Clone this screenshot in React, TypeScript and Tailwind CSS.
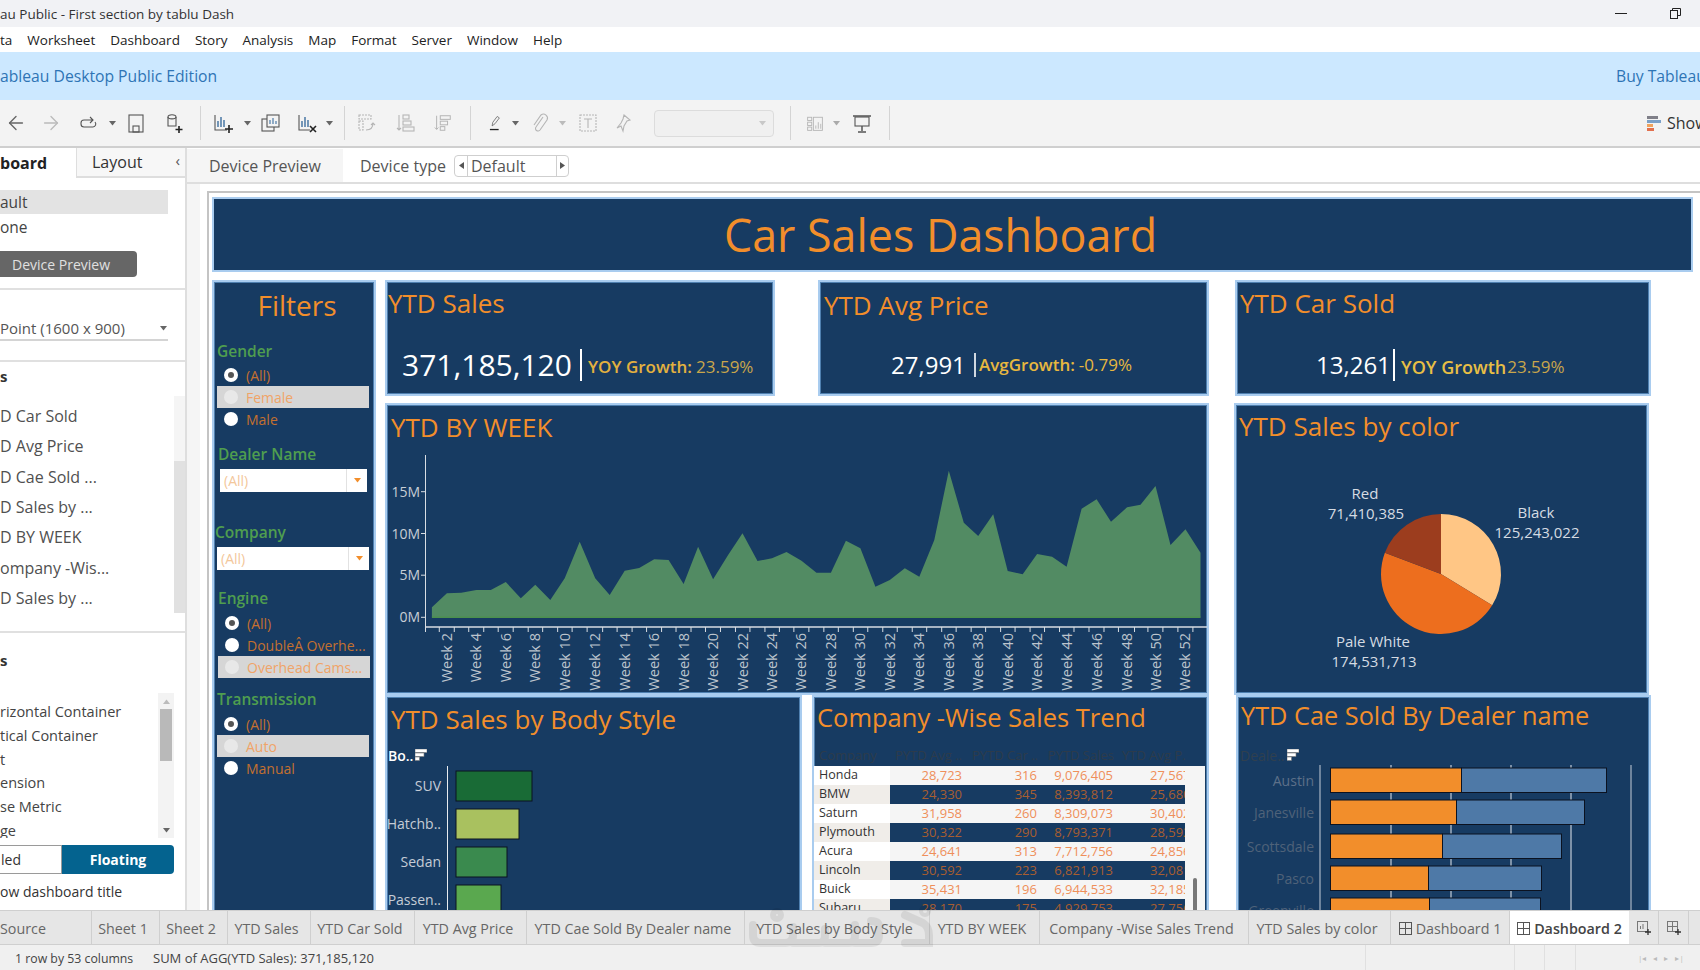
import React from "react";
import { ArrowLeft, ArrowRight } from "lucide-react";

const Caret = ({ c = "#666" }: { c?: string }) => (
  <svg width="7" height="5" viewBox="0 0 7 5"><path d="M0 0h7L3.5 4.5z" fill={c} /></svg>
);

const Cell = ({ w, children }: { w: string; children?: React.ReactNode }) => (
  <div className={`${w} h-full flex items-center justify-center shrink-0`}>{children}</div>
);

const Sep = () => <div className="w-px h-[34px] bg-[#d4d4d4]" />;

const S = ({ children, w = 22, h = 22 }: { children: React.ReactNode; w?: number; h?: number }) => (
  <svg width={w} height={h} viewBox="0 0 22 22" fill="none" stroke="#555" strokeWidth="1.1">{children}</svg>
);

function Toolbar() {
  const off = "#b5b5b5";
  return (
    <div className="h-[48px] bg-[#f3f3f3] border-b-2 border-[#cfcfcf] flex items-center shrink-0">
      <Cell w="w-[31px]"><ArrowLeft size={22} color="#666" strokeWidth={1.5} /></Cell>
      <Cell w="w-[40px]"><ArrowRight size={22} color="#bbb" strokeWidth={1.5} /></Cell>
      <Cell w="w-[34px]"><S><path d="M4 11a3 3 0 0 1 3-3h9M13 5l3 3-3 3" /><path d="M4 11v1a3 3 0 0 0 3 3h9a3 3 0 0 0 2-5" /></S></Cell>
      <Cell w="w-[14px]"><Caret /></Cell>
      <Cell w="w-[34px]"><S><rect x="4" y="3" width="14" height="17" /><rect x="8" y="14" width="6" height="6" /></S></Cell>
      <Cell w="w-[40px]"><S><path d="M6 5c0-3 8-3 8 0v9H6z" /><path d="M6 5c0 2.500 8 2.500 8 0" /><path d="M17 14v7M13.500 17.500h7" stroke="#222" strokeWidth="1.6" /></S></Cell>
      <Cell w="w-[14px]"><Sep /></Cell>
      <Cell w="w-[32px]"><S><path d="M3 3v15h12" /><path d="M6 15V9M9 15V5M12 15V8" stroke="#3c6e9e" strokeWidth="1.4" /><path d="M17 13v8M13 17h8" stroke="#222" strokeWidth="1.6" /></S></Cell>
      <Cell w="w-[16px]"><Caret /></Cell>
      <Cell w="w-[30px]"><S><rect x="3" y="7" width="12" height="12" /><rect x="8" y="3" width="12" height="12" fill="#f3f3f3" /><path d="M11 12V8M14 12V6M17 12V9" stroke="#3c6e9e" /></S></Cell>
      <div className="w-[4px]" />
      <Cell w="w-[36px]"><S><path d="M3 3v15h11" /><path d="M6 15V9M9 15V5M12 15V8" stroke="#3c6e9e" strokeWidth="1.4" /><path d="M14 14l6 6M20 14l-6 6" stroke="#222" strokeWidth="1.6" /></S></Cell>
      <Cell w="w-[8px]"><Caret /></Cell>
      <Cell w="w-[22px]"><Sep /></Cell>
      <Cell w="w-[24px]"><S><g stroke={off} strokeDasharray="2 1"><rect x="3" y="3" width="12" height="4" /><rect x="3" y="9" width="4" height="9" /></g><path d="M10 18c4 0 7-2 7-7M15 13l2-2 2 2" stroke={off} /></S></Cell>
      <Cell w="w-[54px]"><S><g stroke={off}><path d="M4 3v15M2 16l2 2 2-2" /><rect x="8" y="3" width="6" height="4" /><rect x="8" y="9" width="8" height="4" /><rect x="8" y="15" width="11" height="4" /></g></S></Cell>
      <Cell w="w-[20px]"><S><g stroke={off}><path d="M4 3v15M2 16l2 2 2-2" /><rect x="8" y="3" width="11" height="4" /><rect x="8" y="9" width="8" height="4" /><rect x="8" y="15" width="5" height="4" /></g></S></Cell>
      <Cell w="w-[34px]"><Sep /></Cell>
      <Cell w="w-[16px]"><S><path d="M7 15l1-5 6-8 3 2-6 8z" stroke="#666" /><path d="M4 20h12" stroke="#222" strokeWidth="1.8" /></S></Cell>
      <Cell w="w-[24px]"><Caret /></Cell>
      <Cell w="w-[24px]"><S><path d="M15 5l-7 10a2.500 2.500 0 0 0 4 3l7-10a4 4 0 0 0-6-5L6 13" stroke={off} /></S></Cell>
      <Cell w="w-[22px]"><Caret c="#bbb" /></Cell>
      <Cell w="w-[30px]"><S><rect x="3" y="3" width="16" height="16" stroke={off} strokeDasharray="2 1" /><path d="M7 7h8M11 7v9" stroke={off} /></S></Cell>
      <Cell w="w-[40px]"><S><path d="M12 3l6 5-3 1-3 5-1 5-2-5-4 2 4-5 2-4z" stroke={off} /></S></Cell>
      <div className="w-[11px]" />
      <div className="w-[120px] h-[27px] bg-[#f0f0f0] border border-[#dcdcdc] rounded-sm flex items-center justify-end pr-[7px] shrink-0"><Caret c="#c8c8c8" /></div>
      <Cell w="w-[32px]"><Sep /></Cell>
      <Cell w="w-[18px]"><S><g stroke={off}><rect x="2" y="4" width="5" height="4" /><rect x="2" y="10" width="5" height="4" /><rect x="2" y="16" width="5" height="4" /><rect x="9" y="4" width="11" height="16" /><path d="M12 18v-4M15 18v-8M18 18v-6" /></g></S></Cell>
      <Cell w="w-[24px]"><Caret c="#aaa" /></Cell>
      <Cell w="w-[28px]"><S><rect x="4" y="5" width="14" height="9" /><path d="M2 4h18M11 14v5M7 20h8" strokeWidth="1.5" /></S></Cell>
      <Cell w="w-[26px]"><Sep /></Cell>
      <div className="ml-auto flex items-center gap-[6px] w-[53px] overflow-hidden shrink-0">
        <svg width="14" height="15" viewBox="0 0 14 15" className="shrink-0">
          <rect x="0" y="0" width="11" height="3" fill="#7f7f88" />
          <rect x="0" y="4" width="14" height="3" fill="#7ba0c8" />
          <rect x="0" y="8" width="6" height="3" fill="#f0a35e" />
          <rect x="0" y="12" width="7" height="3" fill="#e2704e" />
        </svg>
        <span className="text-[16px] text-[#333] whitespace-nowrap">Show</span>
      </div>
    </div>
  );
}

function Sidebar() {
  return (
    <div className="w-[187px] shrink-0 border-r-2 border-[#dedede] bg-white flex flex-col text-[#444] overflow-hidden">
      <div className="h-[30px] flex shrink-0">
        <div className="w-[76px] font-bold text-[16px] text-[#222] flex items-center">board</div>
        <div className="w-[109px] bg-[#f7f7f7] border-l border-b-2 border-[#dedede] flex items-center justify-between pl-[15px] pr-[5px]">
          <span className="text-[16px] text-[#333]">Layout</span>
          <span className="text-[15px] text-[#555] leading-none -mt-[4px]">‹</span>
        </div>
      </div>
      <div className="mt-[12px] h-[24px] w-[168px] bg-[#e3e3e3] flex items-center text-[15.500px] pt-[1px]">ault</div>
      <div className="h-[28px] flex items-center text-[15.500px]">one</div>
      <div className="mt-[9px] h-[26px] w-[137px] bg-[#666] rounded-r-sm flex items-center pl-[12px] text-[14px] text-[#e0e0e0]">Device Preview</div>
      <div className="mt-[11px] h-[2px] bg-[#e0e0e0]" />
      <div className="mt-[28px] h-[23px] w-[168px] border-b-2 border-[#d4d4d4] flex items-center justify-between pr-[1px] text-[15px] text-[#555]">
        <span>Point (1600 x 900)</span>
        <Caret />
      </div>
      <div className="mt-[19px] h-[2px] bg-[#e0e0e0]" />
      <div className="h-[28px] flex items-center font-bold text-[15px] text-[#333]">s</div>
      <div className="mt-[6px] h-[217px] flex shrink-0">
        <div className="w-[174px] pt-[5px] text-[16px] text-[#505050]">
          {["D Car Sold", "D Avg Price", "D Cae Sold ...", "D Sales by ...", "D BY WEEK", "ompany -Wis...", "D Sales by ..."].map((t, i) => (
            <div key={i} className="h-[30.300px] flex items-center whitespace-nowrap">{t}</div>
          ))}
        </div>
        <div className="w-[11px] bg-[#f5f5f5] flex flex-col">
          <div className="h-[65px]" />
          <div className="flex-1 bg-[#e1e1e1]" />
        </div>
      </div>
      <div className="mt-[18px] h-[2px] bg-[#e0e0e0]" />
      <div className="mt-[17px] h-[20px] flex items-center font-bold text-[15px] text-[#333]">s</div>
      <div className="mt-[23px] h-[145px] w-[174px] flex shrink-0">
        <div className="flex-1 pt-[7px] text-[14.500px] text-[#444] overflow-hidden">
          {["rizontal Container", "tical Container", "t", "ension", "se Metric", "ge"].map((t) => (
            <div key={t} className="h-[23.800px] flex items-center whitespace-nowrap">{t}</div>
          ))}
        </div>
        <div className="w-[16px] bg-[#f3f3f3] flex flex-col items-center">
          <div className="h-[16px] flex items-center"><svg width="7" height="5" viewBox="0 0 7 5"><path d="M0 5h7L3.500 .5z" fill="#bbb" /></svg></div>
          <div className="w-[12px] h-[52px] bg-[#b9b9b9]" />
          <div className="mt-auto h-[16px] flex items-center"><Caret /></div>
        </div>
      </div>
      <div className="mt-[7px] h-[29px] w-[174px] flex shrink-0 text-[14px]">
        <div className="w-[62px] border border-l-0 border-[#9a9a9a] flex items-center pl-[1px] text-[#333]">led</div>
        <div className="flex-1 bg-[#04638f] rounded-r flex items-center justify-center font-bold text-white">Floating</div>
      </div>
      <div className="mt-[6px] h-[22px] flex items-center text-[14px] text-[#333] whitespace-nowrap">ow dashboard title</div>
    </div>
  );
}

const Panel = ({ w, h, children, cls = "" }: { w: string; h: string; children?: React.ReactNode; cls?: string }) => (
  <div className={`${w} ${h} ${cls} shrink-0 bg-[#173b62] border-2 border-[#a9ccef] shadow-[inset_0_0_0_1px_#4f80b0] overflow-hidden`}>{children}</div>
);

const PTitle = ({ children, h = "h-[42px]", cls = "", size = "text-[26px]" }: { children: React.ReactNode; h?: string; cls?: string; size?: string }) => (
  <div className={`${h} ${cls} ${size} flex items-center text-[#f28e2b] whitespace-nowrap`}>{children}</div>
);

const Radio = ({ label, on, hi, cls = "ml-[3px]" }: { label: string; on?: boolean; hi?: boolean; cls?: string }) => (
  <div className={`w-[152px] h-[22px] flex items-center pl-[7px] gap-[8px] text-[14px] whitespace-nowrap overflow-hidden ${hi ? "bg-[#d6d6d6] text-[#f0a468]" : "text-[#c4702f]"} ${cls}`}>
    <span className={`w-[14px] h-[14px] rounded-full flex items-center justify-center shrink-0 ${hi ? "bg-[#e8e8e8]" : "bg-white"}`}>
      {on && <span className="w-[6px] h-[6px] rounded-full bg-[#555]" />}
    </span>
    <span>{label}</span>
  </div>
);

const FHead = ({ children, cls }: { children: React.ReactNode; cls: string }) => (
  <div className={`h-[20px] flex items-center font-semibold text-[15.500px] text-[#4f9e4f] ${cls}`}>{children}</div>
);

const Sel = ({ cls }: { cls: string }) => (
  <div className={`h-[23px] bg-white flex items-center text-[14px] text-[#f3c79b] ${cls}`}>
    <span className="flex-1 pl-[4px]">(All)</span>
    <span className="w-[21px] h-full border-l border-[#e2e2e2] flex items-center justify-center"><Caret c="#f28e2b" /></span>
  </div>
);

function Filters() {
  return (
    <Panel w="w-[164px]" h="h-[640px]">
      <div className="h-[46px] flex items-center justify-center pl-[6px] text-[28px] text-[#f28e2b]">Filters</div>
      <FHead cls="mt-[14px] ml-[3px]">Gender</FHead>
      <div className="mt-[2px]">
        <Radio label="(All)" on />
        <Radio label="Female" hi />
        <Radio label="Male" />
      </div>
      <FHead cls="mt-[15px] ml-[4px]">Dealer Name</FHead>
      <Sel cls="mt-[4px] ml-[6px] w-[147px]" />
      <FHead cls="mt-[31px] ml-[1px]">Company</FHead>
      <Sel cls="mt-[4px] ml-[3px] w-[152px]" />
      <FHead cls="mt-[19px] ml-[4px]">Engine</FHead>
      <div className="mt-[3px]">
        <Radio label="(All)" on cls="ml-[4px]" />
        <Radio label="DoubleÂ Overhe..." cls="ml-[4px]" />
        <Radio label="Overhead Cams..." hi cls="ml-[4px]" />
      </div>
      <FHead cls="mt-[12px] ml-[3px]">Transmission</FHead>
      <div className="mt-[3px]">
        <Radio label="(All)" on />
        <Radio label="Auto" hi />
        <Radio label="Manual" />
      </div>
    </Panel>
  );
}

function Kpis() {
  return (
    <div className="flex h-[116px] shrink-0">
      <Panel w="w-[390px]" h="h-[116px]">
        <PTitle h="h-[42px]" cls="pl-[1px]">YTD Sales</PTitle>
        <div className="mt-[23px] pl-[15px] h-[36px] flex items-center whitespace-nowrap">
          <span className="text-[30px] text-white leading-none w-[171px]">371,185,120</span>
          <span className="ml-[7px] w-[2px] h-[32px] bg-white" />
          <span className="ml-[6px] pt-[4px] text-[17px] font-semibold text-[#e3b13f]">YOY Growth:</span>
          <span className="ml-[4px] pt-[4px] text-[17px] text-[#c9a64b]">23.59%</span>
        </div>
      </Panel>
      <div className="w-[43px] shrink-0" />
      <Panel w="w-[391px]" h="h-[116px]">
        <PTitle h="h-[46px]" cls="pl-[4px]">YTD Avg Price</PTitle>
        <div className="mt-[22px] pl-[71px] h-[30px] flex items-center whitespace-nowrap">
          <span className="text-[24px] text-white leading-none w-[72px]">27,991</span>
          <span className="ml-[11px] w-[2px] h-[24px] bg-[#d0d8e0]" />
          <span className="ml-[3px] text-[17px] font-semibold text-[#e8b83f]">AvgGrowth:</span>
          <span className="ml-[4px] text-[17px] font-medium text-[#e8b83f]">-0.79%</span>
        </div>
      </Panel>
      <div className="w-[26px] shrink-0" />
      <Panel w="w-[416px]" h="h-[116px]">
        <PTitle h="h-[42px]" cls="pl-[3px]">YTD Car Sold</PTitle>
        <div className="mt-[23px] pl-[79px] h-[36px] flex items-center whitespace-nowrap">
          <span className="text-[24px] text-white leading-none w-[71px]">13,261</span>
          <span className="ml-[6px] w-[2px] h-[32px] bg-white" />
          <span className="ml-[6px] pt-[4px] text-[18px] font-semibold text-[#e8bf45]">YOY Growth</span>
          <span className="ml-[1px] pt-[4px] text-[17px] text-[#c9a64b]">23.59%</span>
        </div>
      </Panel>
    </div>
  );
}

const weekZ: [number, number][] = [
  [95,1012],[123,970],[150,968],[178,960],[205,960],[233,936],[261,985],[288,944],[316,990],[343,925],[371,815],[400,925],[427,975],[455,902],[482,894],[510,868],[537,870],[565,942],[592,830],[620,928],[648,855],[675,790],[703,873],[730,865],[757,846],[785,872],[813,908],[840,908],[868,812],[895,835],[923,950],[950,930],[978,895],[1005,920],[1033,810],[1060,602],[1088,758],[1115,798],[1143,733],[1170,903],[1198,913],[1225,852],[1253,860],[1280,890],[1308,716],[1336,688],[1363,755],[1393,712],[1418,704],[1446,648],[1474,825],[1502,778],[1530,848],
];
const px = (z: number) => 380 + z / 1.867;
const py = (z: number) => 270 + z / 3;

function WeekChart() {
  const pts = weekZ.map(([x, y]) => `${px(x).toFixed(1)},${py(y).toFixed(1)}`).join(" ");
  const base = 617.3;
  const area = `${px(95).toFixed(1)},${base} ${pts} ${px(1530).toFixed(1)},${base}`;
  const axis = "#d8dde3";
  return (
    <svg viewBox="386 447 820 246" className="w-[820px] h-[246px] block">
      <polygon points={area} fill="#528b63" />
      <line x1={px(95)} x2={px(1530)} y1={base} y2={base} stroke="#4c8f4f" strokeWidth="1.5" />
      <line x1="424.500" x2="424.500" y1="455" y2="632" stroke={axis} />
      <line x1="424.500" x2="1207" y1="627" y2="627" stroke={axis} strokeWidth="1.5" />
      {weekZ.map(([x], i) => (
        <line key={i} x1={px(x) + 7.4} x2={px(x) + 7.4} y1="627" y2="632" stroke={axis} />
      ))}
      {[["15M", 491.7], ["10M", 533.5], ["5M", 575.2], ["0M", 617.3]].map(([t, y]) => (
        <g key={t as string}>
          <line x1="420" x2="424.500" y1={y as number} y2={y as number} stroke={axis} />
          <text x="419" y={(y as number) + 5} textAnchor="end" fontSize="14" fill="#c8ced6">{t}</text>
        </g>
      ))}
      {weekZ.map(([x], i) =>
        i % 2 === 1 ? (
          <text key={i} transform={`translate(${px(x) + 5},633) rotate(-90)`} textAnchor="end" fontSize="14.500" fill="#bcc4cd">{`Week ${i + 1}`}</text>
        ) : null
      )}
    </svg>
  );
}

function PieChart() {
  const cx = 1441, cy = 574, r = 60;
  const vals = [125243022, 174531713, 71410385];
  const cols = ["#ffc685", "#ed6e1e", "#9c3d1e"];
  const total = vals.reduce((a, b) => a + b, 0);
  let acc = 0;
  const txt = "#d5dbe3";
  return (
    <svg viewBox="1236 447 411 246" className="w-[411px] h-[246px] block">
      {vals.map((v, i) => {
        const a0 = (acc / total) * 2 * Math.PI;
        acc += v;
        const a1 = (acc / total) * 2 * Math.PI;
        const d = `M${cx} ${cy}L${cx + r * Math.sin(a0)} ${cy - r * Math.cos(a0)}A${r} ${r} 0 ${a1 - a0 > Math.PI ? 1 : 0} 1 ${cx + r * Math.sin(a1)} ${cy - r * Math.cos(a1)}Z`;
        return <path key={i} d={d} fill={cols[i]} />;
      })}
      <g fontSize="15" fill={txt} textAnchor="middle">
        <text x="1365" y="499">Red</text>
        <text x="1366" y="519">71,410,385</text>
        <text x="1536" y="518">Black</text>
        <text x="1537" y="538">125,243,022</text>
        <text x="1373" y="647">Pale White</text>
        <text x="1374" y="667">174,531,713</text>
      </g>
    </svg>
  );
}

const SortIc = () => (
  <svg width="12" height="12" viewBox="0 0 12 12">
    <rect x="0" y="0" width="12" height="3.500" fill="#fff" stroke="#777" strokeWidth=".6" />
    <rect x="0" y="4" width="9" height="3.500" fill="#fff" stroke="#777" strokeWidth=".6" />
    <rect x="0" y="8" width="4.500" height="3.500" fill="#fff" stroke="#777" strokeWidth=".6" />
  </svg>
);

function BodyChart() {
  const rows: [string, number, number, string][] = [
    ["SUV", 771, 532, "#196b36"],
    ["Hatchb..", 809, 519, "#a9c15f"],
    ["Sedan", 847, 507, "#3a8a4e"],
    ["Passen..", 885, 501, "#5aa84f"],
  ];
  return (
    <div>
      <div className="flex items-center h-[20px] mt-[4px] pl-[1px] gap-[2px]">
        <span className="text-[14px] font-semibold text-white">Bo..</span>
        <SortIc />
      </div>
      <svg viewBox="387 765 413 146" className="w-[413px] h-[146px] block">
        <line x1="447.500" x2="447.500" y1="766" y2="911" stroke="#e8ecf0" />
        {rows.map(([n, y, e, c]) => (
          <g key={n}>
            <rect x="456" y={y} width={e - 456} height="30" fill={c} stroke="#0b1220" />
            <text x="441" y={y + 20} textAnchor="end" fontSize="14" fill="#c5ccd6">{n}</text>
          </g>
        ))}
      </svg>
    </div>
  );
}

const tbl = [
  ["Honda", "28,723", "316", "9,076,405", "27,567"],
  ["BMW", "24,330", "345", "8,393,812", "25,680"],
  ["Saturn", "31,958", "260", "8,309,073", "30,402"],
  ["Plymouth", "30,322", "290", "8,793,371", "28,592"],
  ["Acura", "24,641", "313", "7,712,756", "24,856"],
  ["Lincoln", "30,592", "223", "6,821,913", "32,081"],
  ["Buick", "35,431", "196", "6,944,533", "32,185"],
  ["Subaru", "28,170", "175", "4,929,753", "27,756"],
];

function CompanyTable() {
  return (
    <div className="flex flex-col">
      <div className="h-[20px] flex items-center text-[13px] text-[#2d3b4b] whitespace-nowrap mt-[9px]">
        <div className="w-[76px] pl-[5px]">Company</div>
        <div className="w-[72px] text-right">PYTD Avg ..</div>
        <div className="w-[76px] text-right overflow-hidden">PYTD Car ..</div>
        <div className="w-[76px] text-right">PYTD Sales</div>
        <div className="w-[72px] pl-[8px] overflow-hidden">YTD Avg P..</div>
      </div>
      <div className="flex">
        <div className="w-[371px]">
          {tbl.map((r, i) => {
            const dark = i % 2 === 1;
            return (
              <div key={r[0]} className={`h-[19px] flex items-center text-[13px] whitespace-nowrap ${dark ? "text-[#a85e30]" : "text-[#ef8f5a]"}`}>
                <div className={`w-[76px] h-full flex items-center pl-[5px] text-[12.500px] text-[#333] ${dark ? "bg-[#f0ede9]" : "bg-white"}`}>{r[0]}</div>
                <div className={`w-[295px] h-full flex items-center ${dark ? "bg-[#173b62]" : "bg-[#f5f5f5]"}`}>
                  <div className="w-[72px] text-right">{r[1]}</div>
                  <div className="w-[75px] text-right">{r[2]}</div>
                  <div className="w-[76px] text-right">{r[3]}</div>
                  <div className="w-[72px] pl-[37px] overflow-hidden">{r[4]}</div>
                </div>
              </div>
            );
          })}
        </div>
        <div className="w-[20px] bg-[#f5f5f5] flex justify-center">
          <div className="mt-[112px] w-[4px] h-[40px] bg-[#777] rounded-sm" />
        </div>
      </div>
    </div>
  );
}

function DealerChart() {
  const rows: [string, number, number, number, string][] = [
    ["Austin", 768, 1461, 1606, "#5d7089"],
    ["Janesville", 800, 1456, 1584, "#4f6279"],
    ["Scottsdale", 834, 1442, 1561, "#4f6279"],
    ["Pasco", 866, 1428, 1541, "#4f6279"],
    ["Greenville", 898, 1429, 1540, "#4f6279"],
  ];
  return (
    <div>
      <div className="flex items-center h-[20px] mt-[10px] pl-[2px] gap-[2px]">
        <span className="text-[14px] text-[#30404f]">Deale..</span>
        <SortIc />
      </div>
      <svg viewBox="1238 765 409 146" className="w-[409px] h-[146px] block">
        <line x1="1320" x2="1320" y1="765" y2="911" stroke="#c6ced8" />
        <line x1="1631" x2="1631" y1="765" y2="911" stroke="#c6ced8" />
        {[1391, 1451, 1511, 1571].map((x) => (
          <line key={x} x1={x} x2={x} y1="765" y2="911" stroke="#e6eaef" />
        ))}
        {rows.map(([n, y, m, e, c]) => (
          <g key={n}>
            <rect x="1330.500" y={y} width={m - 1330} height="24.500" fill="#f28e2b" stroke="#0b1220" />
            <rect x={m + 0.5} y={y} width={e - m} height="24.500" fill="#4e79a7" stroke="#0b1220" />
            <text x="1314" y={y + 18} textAnchor="end" fontSize="14" fill={c}>{n}</text>
          </g>
        ))}
      </svg>
    </div>
  );
}

function Dashboard() {
  return (
    <div className="flex-1 bg-white overflow-hidden flex">
      <div className="w-[13px] bg-[#f5f5f5] shrink-0" />
      <div className="w-[7px] shrink-0" />
      <div className="flex-1 mt-[7px] border-t-2 border-l-2 border-[#c4c4c4] pt-[4px] pl-[3px] overflow-hidden">
        <div className="w-[1481px] h-[75px] bg-[#173b62] border-2 border-[#a9ccef] flex items-center justify-center pr-[24px] pt-[1px] text-[44.800px] text-[#f28e2b]">Car Sales Dashboard</div>
        <div className="mt-[8px] flex">
          <Filters />
          <div className="ml-[9px] flex flex-col">
            <Kpis />
            <div className="mt-[7px] flex h-[292px] shrink-0">
              <Panel w="w-[824px]" h="h-[292px]">
                <PTitle h="h-[42px]" cls="pl-[4px] pt-[2px]">YTD BY WEEK</PTitle>
                <WeekChart />
              </Panel>
              <div className="w-[25px] shrink-0" />
              <Panel w="w-[415px]" h="h-[292px]">
                <PTitle h="h-[42px]" cls="pl-[3px]">YTD Sales by color</PTitle>
                <PieChart />
              </Panel>
            </div>
            <div className="flex h-[300px] shrink-0">
              <Panel w="w-[417px]" h="h-[300px]">
                <PTitle h="h-[44px]" cls="pl-[4px]">YTD Sales by Body Style</PTitle>
                <BodyChart />
              </Panel>
              <div className="w-[10px] shrink-0" />
              <Panel w="w-[397px]" h="h-[300px]">
                <PTitle h="h-[40px]" cls="pl-[3px]" size="text-[25.500px]">Company -Wise Sales Trend</PTitle>
                <CompanyTable />
              </Panel>
              <div className="w-[27px] shrink-0" />
              <Panel w="w-[415px]" h="h-[300px]">
                <PTitle h="h-[38px]" cls="pl-[3px]" size="text-[25.300px]">YTD Cae Sold By Dealer name</PTitle>
                <DealerChart />
              </Panel>
            </div>
          </div>
        </div>
      </div>
    </div>
  );
}

const GridIc = () => (
  <svg width="13" height="13" viewBox="0 0 13 13" fill="none" stroke="#555"><rect x=".5" y=".5" width="12" height="12" /><path d="M6.500 .5v12M.5 6.500h12" /></svg>
);

function SheetTabs() {
  const tabs: [string, string][] = [
    ["Sheet 1", "w-[68px]"],
    ["Sheet 2", "w-[68px]"],
    ["YTD Sales", "w-[83px]"],
    ["YTD Car Sold", "w-[104px]"],
    ["YTD Avg Price", "w-[112px]"],
    ["YTD Cae Sold By Dealer name", "w-[218px]"],
    ["YTD Sales by Body Style", "w-[185px]"],
    ["YTD BY WEEK", "w-[110px]"],
    ["Company -Wise Sales Trend", "w-[209px]"],
    ["YTD Sales by color", "w-[142px]"],
  ];
  return (
    <div className="h-[35px] shrink-0 bg-[#e6e6e6] border-t border-b border-[#cfcfcf] flex text-[14.300px] text-[#666] whitespace-nowrap">
      <div className="w-[92px] h-full border-r border-[#cfcfcf] flex items-center pt-[2px] shrink-0">Source</div>
      {tabs.map(([t, w]) => (
        <div key={t} className={`${w} h-full border-r border-[#cfcfcf] flex items-center justify-center pr-[5px] pt-[2px] shrink-0`}>{t}</div>
      ))}
      <div className="w-[119px] h-full border-r border-[#cfcfcf] flex items-center justify-center gap-[4px] pt-[2px] shrink-0"><GridIc />Dashboard 1</div>
      <div className="w-[119px] h-full bg-white flex items-center justify-center gap-[4px] pt-[2px] shrink-0 font-semibold text-[#444]"><GridIc />Dashboard 2</div>
      <div className="w-[30px] h-full border-r border-[#cfcfcf] flex items-center justify-center shrink-0">
        <svg width="16" height="16" viewBox="0 0 16 16" fill="none" stroke="#777"><rect x="1.500" y="1.500" width="10" height="10" /><path d="M4.500 9V6M7 9V4" /><path d="M12 9v6M9 12h6" stroke="#333" strokeWidth="1.300" /></svg>
      </div>
      <div className="w-[30px] h-full border-r border-[#cfcfcf] flex items-center justify-center shrink-0">
        <svg width="16" height="16" viewBox="0 0 16 16" fill="none" stroke="#777"><rect x="1.500" y="1.500" width="10" height="10" /><path d="M6.500 1.500v10M1.500 6.500h10" /><path d="M12 9v6M9 12h6" stroke="#333" strokeWidth="1.300" /></svg>
      </div>
    </div>
  );
}

function Status() {
  return (
    <div className="h-[25px] shrink-0 bg-[#f0f0f0] flex items-center text-[13px] text-[#444] whitespace-nowrap">
      <span className="ml-[15px] w-[138px] pt-[3px] text-[12.300px]">1 row by 53 columns</span>
      <span className="w-[1212px] pt-[3px]">SUM of AGG(YTD Sales): 371,185,120</span>
      <span className="h-full w-[149px] border-l border-[#e0e0e0]" />
      <span className="h-full w-[30px] border-l border-[#e0e0e0]" />
      <span className="h-full w-[31px] border-l border-[#e0e0e0]" />
      <span className="h-full flex-1 border-l border-[#e0e0e0] flex items-center gap-[7px] pl-[62px]">
        {["|◂", "◂", "▸", "▸|"].map((g) => <span key={g} className="text-[8px] text-[#bbb]">{g}</span>)}
      </span>
    </div>
  );
}

const Watermark = () => (
  <svg viewBox="0 0 230 50" className="absolute left-[735px] top-[905px] w-[230px] h-[50px] pointer-events-none opacity-[0.07]" fill="none" stroke="#000" strokeWidth="8" strokeLinecap="round">
    <path d="M18 20v10q0 8 8 8h24q8 0 8-8v-8" />
    <path d="M58 38h26q6 0 6-8v-6M90 38h24q6 0 6-8v-10" />
    <path d="M120 38h16q8 0 8-8v-8q0-6-8-6" />
    <path d="M170 10l18 8q6 4 6 12v8h-24" />
    <circle cx="42" cy="10" r="3" />
    <circle cx="190" cy="6" r="2" />
  </svg>
);

export default function App() {
  const menu = ["ta", "Worksheet", "Dashboard", "Story", "Analysis", "Map", "Format", "Server", "Window", "Help"];
  return (
    <div className="relative w-[1700px] h-[970px] flex flex-col overflow-hidden bg-white" style={{ fontFamily: '"Open Sans", "Noto Sans", sans-serif' }}>
      <div className="h-[27px] shrink-0 bg-[#f1f2f5] flex items-center justify-between text-[13.500px] text-[#333] pt-[2px]">
        <span>au Public - First section by tablu Dash</span>
        <div className="flex items-center -mt-[2px]">
          <span className="w-[12px] h-[1px] bg-[#222] mr-[43px]" />
          <svg width="11" height="11" viewBox="0 0 11 11" fill="none" stroke="#222" className="mr-[19px]"><rect x=".5" y="2.500" width="7" height="8" /><path d="M2.500 2.500v-2h8v7h-2.500" /></svg>
        </div>
      </div>
      <div className="h-[25px] shrink-0 bg-white flex items-center gap-[15px] text-[13.500px] text-[#222] pt-[2px]">
        {menu.map((m) => <span key={m}>{m}</span>)}
      </div>
      <div className="h-[48px] shrink-0 bg-[#cce8ff] flex items-center justify-between text-[15.700px] text-[#2e74b5] whitespace-nowrap overflow-hidden pt-[2px]">
        <span>ableau Desktop Public Edition</span>
        <span className="w-[84px] overflow-hidden">Buy Tableau</span>
      </div>
      <Toolbar />
      <div className="h-[762px] shrink-0 flex overflow-hidden">
        <Sidebar />
        <div className="flex-1 flex flex-col overflow-hidden">
          <div className="h-[36px] shrink-0 bg-white border-b-2 border-[#dedede] flex items-center text-[16px] text-[#555] pt-[1px]">
            <div className="w-[156px] h-full bg-[#f5f5f5] flex items-center pl-[22px]">Device Preview</div>
            <span className="ml-[17px] w-[94px]">Device type</span>
            <div className="w-[115px] h-[22px] border border-[#cfcfcf] rounded-sm flex items-center">
              <span className="w-[13px] h-full border-r border-[#cfcfcf] flex items-center justify-center"><svg width="5" height="7" viewBox="0 0 5 7"><path d="M5 0v7L0 3.500z" fill="#555" /></svg></span>
              <span className="flex-1 pl-[3px] text-[#555]">Default</span>
              <span className="w-[12px] h-full border-l border-[#cfcfcf] flex items-center justify-center"><svg width="5" height="7" viewBox="0 0 5 7"><path d="M0 0v7l5-3.500z" fill="#555" /></svg></span>
            </div>
          </div>
          <Dashboard />
        </div>
      </div>
      <SheetTabs />
      <Status />
      <Watermark />
    </div>
  );
}
